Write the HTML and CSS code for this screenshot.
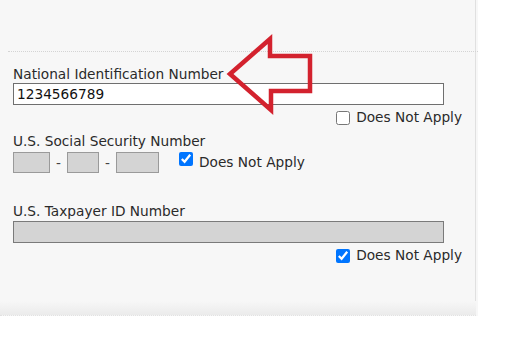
FILE: index.html
```html
<!DOCTYPE html>
<html lang="en">
<head>
    <meta charset="UTF-8">
    <meta name="viewport" content="width=device-width, initial-scale=1.0">
    <title>Identification Numbers</title>
    <link rel="stylesheet" href="styles.css">
</head>
<body>
    <div class="panel">
        <div class="panel-main">
            <div class="panel-top"></div>

            <form class="id-form">
                <!-- National ID -->
                <div class="field">
                    <label for="national_id">National Identification Number</label>
                    <input type="text" id="national_id" class="text-input" value="1234566789" />
                    <div class="dna-row">
                        <input type="checkbox" id="national_dna" />
                        <label for="national_dna">Does Not Apply</label>
                    </div>
                </div>

                <!-- SSN -->
                <div class="field">
                    <label for="ssn1" class="ssn-label">U.S. Social Security Number</label>
                    <div class="ssn-row">
                        <input type="text" id="ssn1" class="ssn-box ssn-1" disabled />
                        <span class="dash">-</span>
                        <input type="text" class="ssn-box ssn-2" disabled />
                        <span class="dash">-</span>
                        <input type="text" class="ssn-box ssn-3" disabled />
                        <input type="checkbox" id="ssn_dna" class="ssn-check" checked />
                        <label for="ssn_dna">Does Not Apply</label>
                    </div>
                </div>

                <!-- Taxpayer ID -->
                <div class="field">
                    <label for="tax_id" class="tax-label">U.S. Taxpayer ID Number</label>
                    <input type="text" id="tax_id" class="text-input" disabled />
                    <div class="dna-row">
                        <input type="checkbox" id="tax_dna" checked />
                        <label for="tax_dna">Does Not Apply</label>
                    </div>
                </div>
            </form>
        </div>
        <div class="panel-foot"></div>

        <!-- Red callout arrow -->
        <svg class="arrow" width="96" height="84" viewBox="0 0 96 84">
            <polygon points="6,40 46,5 46,22 86,22 86,57 47,57 47,76" fill="none" stroke="#d3222e" stroke-width="4.5" stroke-linejoin="miter"/>
        </svg>
    </div>
</body>
</html>
```

FILE: styles.css
```css
/* Page */
body {
    margin: 0;
    background-color: #fff;
    font-family: "DejaVu Sans", Verdana, sans-serif;
    font-size: 13.7px;
    color: #2a2a2a;
}

.panel {
    position: relative;
    width: 476px;
    padding-right: 2px;
    background-color: #f7f7f7;
}

.panel-main {
    border-right: 1px solid #e0e0e0;
}

.panel-top {
    height: 51px;
    margin-left: 8px;
    margin-right: -3px;
    border-bottom: 1px dotted #d4d4d4;
}

/* Form */
.id-form {
    padding: 15px 0 38px 13px;
}

.field label {
    display: block;
    line-height: 15px;
}

.text-input {
    display: block;
    box-sizing: border-box;
    width: 431px;
    height: 22px;
    margin: 1px 0 0;
    padding: 0 3px;
    border: 1px solid #6f6f6f;
    border-radius: 0;
    background-color: #fff;
    font-family: "DejaVu Sans", Verdana, sans-serif;
    font-size: 13.7px;
    color: #111;
}

.text-input:disabled {
    background-color: #d4d4d4;
    border-color: #7a7a7a;
}

.dna-row {
    display: flex;
    justify-content: flex-end;
    align-items: center;
    width: 449px;
    margin-top: 5px;
    gap: 6px;
}

input[type="checkbox"] {
    width: 14px;
    height: 14px;
    margin: 0;
}

.ssn-label {
    margin-top: 9px;
}

.ssn-row {
    display: flex;
    align-items: center;
    margin-top: 3px;
}

.ssn-row label {
    margin-left: 6px;
}

.ssn-box {
    box-sizing: border-box;
    height: 21px;
    margin: 0;
    border: 1px solid #9a9a9a;
    border-radius: 0;
    background-color: #d4d4d4;
}

.ssn-1 { width: 37px; }
.ssn-2 { width: 32px; }
.ssn-3 { width: 43px; }

.dash {
    width: 17px;
    text-align: center;
    color: #444;
}

.ssn-check {
    align-self: flex-start;
    margin-left: 20px !important;
}

.tax-label {
    margin-top: 31px;
}

.tax-label + .text-input {
    margin-top: 2px;
}

/* Bottom edge */
.panel-foot {
    height: 14px;
    background: linear-gradient(#f7f7f7, #ebebeb);
    border-bottom: 1px dotted #e2e2e2;
}

/* Callout */
.arrow {
    position: absolute;
    left: 224px;
    top: 34px;
}
```
